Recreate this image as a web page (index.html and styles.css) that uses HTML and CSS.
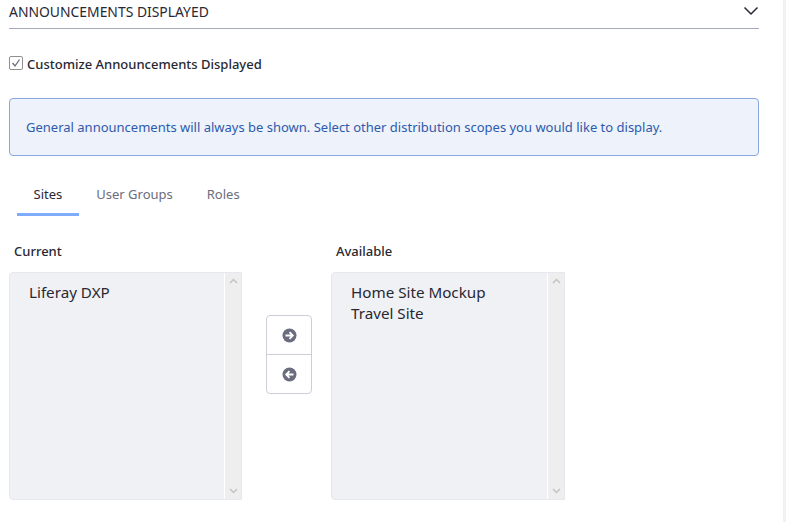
FILE: index.html
```html
<!DOCTYPE html>
<html lang="en">
<head>
    <meta charset="UTF-8">
    <title>Announcements Displayed</title>
    <link rel="stylesheet" href="styles.css">
</head>
<body>
    <div class="page">
        <div class="section-header">
            <span class="section-title">ANNOUNCEMENTS DISPLAYED</span>
            <svg class="chevron" width="16" height="10" viewBox="0 0 16 10"><path d="M1.5 1.5 L8 8 L14.5 1.5" fill="none" stroke="#272833" stroke-width="1.5"/></svg>
        </div>

        <label class="customize">
            <span class="checkbox">
                <svg width="12" height="12" viewBox="0 0 12 12"><path d="M2.5 6 L5 9 L9.5 2.5" fill="none" stroke="#6b6c7e" stroke-width="1.3"/></svg>
            </span>
            Customize Announcements Displayed
        </label>

        <div class="alert">General announcements will always be shown. Select other distribution scopes you would like to display.</div>

        <div class="tabs">
            <div class="tab active">Sites</div>
            <div class="tab">User Groups</div>
            <div class="tab">Roles</div>
        </div>

        <div class="selector">
            <div class="column column-current">
                <div class="column-label">Current</div>
                <div class="listbox">
                    <div class="options">
                        <div>Liferay DXP</div>
                    </div>
                    <div class="scrollbar">
                        <svg width="9" height="6" viewBox="0 0 9 6"><path d="M1 5 L4.5 1.5 L8 5" fill="none" stroke="#c4c4c4" stroke-width="1.5"/></svg>
                        <svg width="9" height="6" viewBox="0 0 9 6"><path d="M1 1 L4.5 4.5 L8 1" fill="none" stroke="#c4c4c4" stroke-width="1.5"/></svg>
                    </div>
                </div>
            </div>

            <div class="move-buttons">
                <div class="move-button">
                    <svg width="15" height="15" viewBox="0 0 15 15"><circle cx="7.5" cy="7.5" r="7" fill="#6b6c7e"/><path d="M3.5 7.5 H10.5 M7.5 4.2 L10.8 7.5 L7.5 10.8" fill="none" stroke="#fff" stroke-width="1.8"/></svg>
                </div>
                <div class="move-button">
                    <svg width="15" height="15" viewBox="0 0 15 15"><circle cx="7.5" cy="7.5" r="7" fill="#6b6c7e"/><path d="M11.5 7.5 H4.5 M7.5 4.2 L4.2 7.5 L7.5 10.8" fill="none" stroke="#fff" stroke-width="1.8"/></svg>
                </div>
            </div>

            <div class="column column-available">
                <div class="column-label">Available</div>
                <div class="listbox">
                    <div class="options">
                        <div>Home Site Mockup</div>
                        <div>Travel Site</div>
                    </div>
                    <div class="scrollbar">
                        <svg width="9" height="6" viewBox="0 0 9 6"><path d="M1 5 L4.5 1.5 L8 5" fill="none" stroke="#c4c4c4" stroke-width="1.5"/></svg>
                        <svg width="9" height="6" viewBox="0 0 9 6"><path d="M1 1 L4.5 4.5 L8 1" fill="none" stroke="#c4c4c4" stroke-width="1.5"/></svg>
                    </div>
                </div>
            </div>
        </div>
    </div>
</body>
</html>
```

FILE: styles.css
```css
:root {
    --text-color: #272833;
    --muted-color: #6b6c7e;
    --accent-color: #80acff;
    --list-bg: #f0f1f5;
    --scroll-bg: #eeeeee;
}

html, body {
    height: 100%;
}

body {
    margin: 0;
    background-color: #fff;
    color: var(--text-color);
    font-family: "Noto Sans", sans-serif;
    overflow: hidden;
    border-right: 3px solid #f1f1f4;
    box-sizing: border-box;
}

.page {
    width: 750px;
    margin-left: 9px;
}

.section-header {
    display: flex;
    justify-content: space-between;
    align-items: center;
    height: 24px;
    padding-bottom: 4px;
    border-bottom: 1px solid #a7a9bc;
}

.section-title {
    font-size: 13.9px;
    line-height: 24px;
}

.chevron {
    margin-top: -3px;
}

.customize {
    display: flex;
    align-items: center;
    gap: 4px;
    margin-top: 26px;
    font-size: 13px;
    font-weight: 500;
    line-height: 18px;
}

.checkbox {
    display: flex;
    width: 12px;
    height: 12px;
    border: 1px solid #8f8f8f;
    border-radius: 2px;
    margin-top: -3px;
}

.alert {
    margin-top: 25px;
    height: 58px;
    box-sizing: border-box;
    padding: 0 16px;
    display: flex;
    align-items: center;
    background-color: #edf2fb;
    border: 1px solid #89a7e0;
    border-radius: 4px;
    color: #2e5aac;
    font-size: 13px;
}

.tabs {
    display: flex;
    gap: 1px;
    margin-top: 26px;
    margin-left: 8px;
}

.tab {
    padding: 0 16.5px;
    height: 31px;
    line-height: 24px;
    font-size: 13px;
    color: var(--muted-color);
}

.tab.active {
    color: var(--text-color);
    border-bottom: 3px solid var(--accent-color);
}

.selector {
    display: flex;
    align-items: flex-start;
    margin-top: 25px;
}

.column-current {
    width: 233px;
}

.column-available {
    width: 234px;
}

.column-label {
    height: 31px;
    line-height: 20px;
    padding-left: 5px;
    font-size: 13px;
    font-weight: 500;
}

.listbox {
    display: flex;
    height: 228px;
    box-sizing: border-box;
    background-color: var(--list-bg);
    border: 1px solid #e7e7ed;
    border-radius: 4px 0 0 4px;
}

.options {
    flex: 1;
    padding: 9px 19px;
    font-size: 15.2px;
    line-height: 21px;
}

.scrollbar {
    width: 16px;
    display: flex;
    flex-direction: column;
    justify-content: space-between;
    align-items: center;
    padding: 5px 0;
    background-color: var(--scroll-bg);
    border-left: 1px solid #fff;
}

.move-buttons {
    width: 46px;
    height: 79px;
    box-sizing: border-box;
    margin: 74px 19px 0 24px;
    border: 1px solid #cdced9;
    border-radius: 4px;
    display: flex;
    flex-direction: column;
}

.move-button {
    flex: 1;
    display: flex;
    align-items: center;
    justify-content: center;
}

.move-button + .move-button {
    border-top: 1px solid #cdced9;
}
```
